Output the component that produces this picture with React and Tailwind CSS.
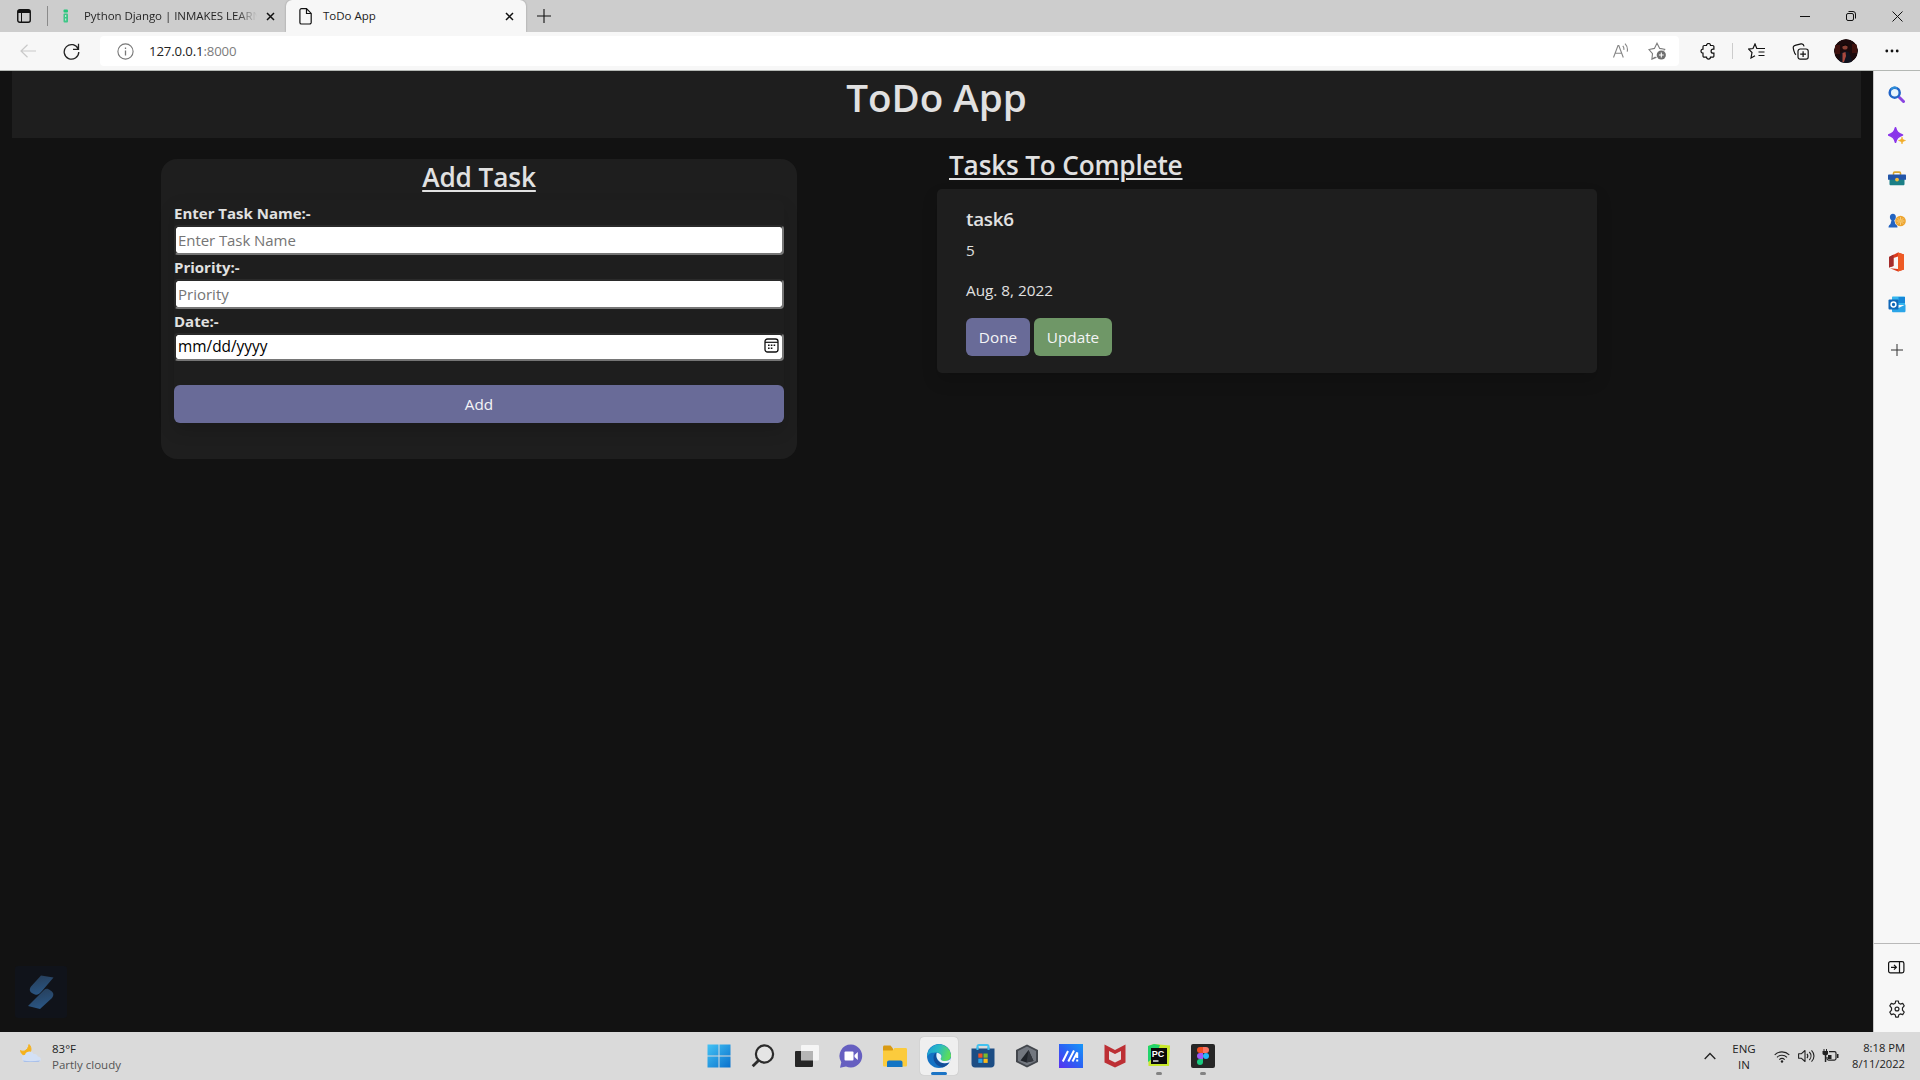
import React from "react";

const Svg = ({ w, h = w, vb, children, className = "" }) => (
  <svg width={w} height={h} viewBox={vb || `0 0 ${w} ${h}`} fill="none" className={`block shrink-0 ${className}`}>
    {children}
  </svg>
);

const CloseIcon = () => (
  <Svg w={9}>
    <path d="M1 1l7 7M8 1l-7 7" stroke="#111" strokeWidth="1.5" />
  </Svg>
);

function TabBar() {
  return (
    <div className="flex h-[32px] items-center bg-[#cdcdcd]">
      <div className="flex w-[47px] justify-center">
        <Svg w={14}>
          <rect x="0.75" y="0.75" width="12.5" height="12.5" rx="2" stroke="#111" strokeWidth="1.4" />
          <path d="M1 1h12v3H1z" fill="#111" />
          <path d="M4.5 3v10" stroke="#111" />
        </Svg>
      </div>
      <div className="h-[20px] w-px bg-[#8a8a8a]" />
      <div className="flex w-[238px] items-center">
        <Svg w={6} h={14} className="ml-[15px]">
          <rect x="0.5" y="0.5" width="4.5" height="3" rx="1" fill="#22c77a" />
          <rect x="0.5" y="4.5" width="4.5" height="9" rx="1" fill="#3fc687" />
          <path d="M2.7 6v2M2.7 9.5v2" stroke="#d9efe4" />
        </Svg>
        <div className="ml-[15px] w-[173px] overflow-hidden whitespace-nowrap bg-gradient-to-r from-[#222] from-88% to-transparent bg-clip-text text-[11.5px] leading-4 tracking-[-0.05px] text-transparent">
          Python Django | INMAKES LEARN
        </div>
        <div className="ml-[9px]">
          <CloseIcon />
        </div>
      </div>
      <div className="flex h-[32px] w-[240px] items-center rounded-t-[6px] bg-[#f7f7f7] shadow-[0_0_2px_rgba(0,0,0,0.3)]">
        <Svg w={13} h={17} className="ml-[13px]">
          <path d="M2.5 0.7h5l4.7 4.7v9a1.6 1.6 0 0 1-1.6 1.6H2.5a1.6 1.6 0 0 1-1.6-1.6V2.3A1.6 1.6 0 0 1 2.5 0.7zM7.5 1v4.5H12" stroke="#111" strokeWidth="1.2" />
        </Svg>
        <div className="ml-[11px] w-[182px] whitespace-nowrap text-[11.5px] leading-4 text-[#222]">ToDo App</div>
        <CloseIcon />
      </div>
      <Svg w={14} className="ml-[11px]">
        <path d="M7 0v14M0 7h14" stroke="#111" strokeWidth="1.1" />
      </Svg>
      <div className="ml-auto flex">
        <div className="flex w-[46px] justify-center">
          <Svg w={10}>
            <path d="M0 5.5h10" stroke="#111" />
          </Svg>
        </div>
        <div className="flex w-[46px] justify-center">
          <Svg w={10}>
            <rect x="0.5" y="2.5" width="7" height="7" rx="1.5" stroke="#111" />
            <path d="M2.5 0.5h4.5a2.5 2.5 0 0 1 2.5 2.5v4.5" stroke="#111" />
          </Svg>
        </div>
        <div className="flex w-[46px] justify-center">
          <Svg w={11}>
            <path d="M0.5 0.5l10 10M10.5 0.5l-10 10" stroke="#111" />
          </Svg>
        </div>
      </div>
    </div>
  );
}

function Toolbar() {
  return (
    <div className="flex h-[39px] items-center border-b border-[#b4b8b4] bg-[#f7f7f7]">
      <Svg w={16} h={14} className="ml-[20px]">
        <path d="M16 7H1M7.5 0.7L1 7l6.5 6.300" stroke="#c9c9c9" strokeWidth="1.2" />
      </Svg>
      <Svg w={17} h={17} className="ml-[27px]">
        <path d="M15.3 6.2A7.3 7.3 0 1 0 15.800 9M15.500 0.800v5.500H10" stroke="#222" strokeWidth="1.300" />
      </Svg>
      <div className="ml-[20px] flex h-[30px] w-[1579px] items-center rounded-[4px] bg-white">
        <Svg w={17} className="ml-[17px]">
          <circle cx="8.500" cy="8.500" r="7.600" stroke="#777" strokeWidth="1.100" />
          <path d="M8.500 7.500v5M8.500 4.500v1.400" stroke="#777" strokeWidth="1.300" />
        </Svg>
        <div className="ml-[15px] text-[13.200px] leading-5 tracking-[-0.130px] text-[#222]">
          127.0.0.1<span className="text-[#7c7c7c]">:8000</span>
        </div>
        <Svg w={16} h={16} className="ml-auto">
          <path d="M0.500 14.500L5 2.500h0.800l4.500 12M2.200 10.200h6.400M9.800 2.800c1 1.100 1.300 2.500 1 4M12 0.600c2.200 2.300 2.900 5 2.200 8" stroke="#858585" strokeWidth="1.100" />
        </Svg>
        <Svg w={18} className="mr-[13px] ml-[19px]">
          <path d="M8.500 15.200l-4.600 2 .6-5.600L1 7.500l5.400-1.100L9 1.200l2.700 5.200 5 .9-1 1.200M7.500 15l-3.400 2" stroke="#7d7d7d" strokeWidth="1.100" />
          <circle cx="13.300" cy="13" r="4.600" fill="#6e6e6e" />
          <path d="M13.300 10.600v4.800M10.900 13h4.800" stroke="#fff" strokeWidth="1.100" />
        </Svg>
      </div>
      <Svg w={17} className="ml-[21px]">
        <path d="M4.200 2.500h2.300a2 2 0 0 1 4 0h2.200a1.200 1.200 0 0 1 1.200 1.200v2.500h-.8a2 2 0 0 0 0 4h.8v2.700a1.200 1.200 0 0 1-1.200 1.200h-2.200a2 2 0 0 1-4 0H4.200A1.200 1.200 0 0 1 3 12.900v-2.700a2 2 0 0 1 0-4V3.700a1.200 1.200 0 0 1 1.200-1.200z" stroke="#111" strokeWidth="1.200" />
      </Svg>
      <div className="ml-[15px] h-[16px] w-px bg-[#ccc]" />
      <Svg w={18} h={16} className="ml-[15px]">
        <path d="M10.500 5.500h-1.700L7 1 5 5.500l-4.400.6L4 9.500l-1 5.500 4-2.200" stroke="#111" strokeWidth="1.200" />
        <path d="M10 5.500h7M10.500 9h6M10.500 12.500h6" stroke="#111" strokeWidth="1.200" />
      </Svg>
      <Svg w={17} className="ml-[26px]">
        <rect x="6" y="6" width="10.200" height="10.200" rx="2.200" stroke="#111" strokeWidth="1.200" />
        <path d="M11.100 8.200v5.800M8.200 11.100h5.800M4 11.700C2.500 11 2.300 9.500 1.700 7.200.8 3.800 1 3 4 2.200L9 .9c1.800-.4 2.600.4 3.100 2.400" stroke="#111" strokeWidth="1.200" />
      </Svg>
      <Svg w={24} className="ml-[25px] rounded-full">
        <circle cx="12" cy="12" r="12" fill="#1c0a0c" />
        <path d="M1 6h5v9H1zM18 5h5v9h-5z" fill="#3f110e" />
        <path d="M4 24l3-10 4-2 4 1 4 11z" fill="#11131f" />
        <circle cx="11" cy="8" r="2.600" fill="#8b4034" />
        <path d="M7.800 7.500a3.400 3.400 0 0 1 6.600 0l-3-1z" fill="#090506" />
        <path d="M8.500 14l3-1 .5 4-2 6H8.500z" fill="#a8483e" />
      </Svg>
      <Svg w={14} h={4} className="ml-[27px]">
        <circle cx="1.800" cy="2" r="1.400" fill="#111" />
        <circle cx="7" cy="2" r="1.400" fill="#111" />
        <circle cx="12.200" cy="2" r="1.400" fill="#111" />
      </Svg>
    </div>
  );
}

const Field = ({ label, children }) => (
  <div>
    <div className="h-[24px] text-[15px] font-bold leading-[25px] text-[#e1e1e1]">{label}</div>
    {children}
  </div>
);

const inputBox =
  "flex w-full items-center rounded-[4px] border-2 border-t-[#2a2a2a] border-l-[#2a2a2a] border-r-[#767676] border-b-[#767676] bg-white bg-clip-padding px-[2px]";

function AddTask() {
  return (
    <section className="mt-[21px] ml-[161px] h-[300px] w-[636px] rounded-[16px] bg-[#1e1e1e] px-[13px]">
      <h2 className="h-[41px] pt-[1px] text-center text-[26.2px] font-semibold leading-[34px] tracking-[-0.1px] text-[#e1e1e1] underline decoration-2 underline-offset-[3px]">
        Add Task
      </h2>
      <form className="flex h-[223px] flex-col rounded-[6px] pt-px shadow-[0_8px_16px_rgba(0,0,0,0.15)]">
        <Field label="Enter Task Name:-">
          <input placeholder="Enter Task Name" className={`${inputBox} h-[30px] text-[15px] tracking-[-0.07px] placeholder:text-[#757575]`} />
        </Field>
        <Field label="Priority:-">
          <input placeholder="Priority" className={`${inputBox} h-[30px] text-[15px] placeholder:text-[#757575]`} />
        </Field>
        <Field label="Date:-">
          <div className={`${inputBox} h-[28px] justify-between text-[15.4px] text-black`}>
            <span>mm/dd/yyyy</span>
            <Svg w={15} h={15} className="mr-px mb-[3px]">
              <rect x="1" y="1" width="13" height="13" rx="2.500" stroke="#111" strokeWidth="1.300" />
              <path d="M1 4.300h13" stroke="#111" strokeWidth="1.200" />
              <path d="M4 7.300h1.600M6.800 7.300h1.600M9.600 7.300h1.600M4 10.300h1.600M6.800 10.300h1.600" stroke="#111" strokeWidth="1.500" />
            </Svg>
          </div>
        </Field>
        <button type="button" className="mt-auto h-[38px] w-full rounded-[6px] bg-[#696b98] text-[15.300px] text-[#f4f4f6]">
          Add
        </button>
      </form>
    </section>
  );
}

function TaskList() {
  return (
    <section className="ml-[140px] w-[660px]">
      <h2 className="h-[51px] pt-[10px] pl-[12px] text-[26.2px] font-semibold leading-[34px] tracking-[-0.18px] text-[#e1e1e1] underline decoration-2 underline-offset-[3px]">
        Tasks To Complete
      </h2>
      <article className="h-[184px] rounded-[5px] bg-[#1e1e1e] pt-[18px] pl-[29px] text-[15.3px] text-[#e1e1e1] shadow-[0_8px_16px_rgba(0,0,0,0.15)]">
        <h3 className="h-[31px] text-[18.8px] font-semibold leading-[24px] tracking-[-0.25px]">task6</h3>
        <p className="h-[40px] leading-[24px]">5</p>
        <p className="h-[40px] leading-[24px]">Aug. 8, 2022</p>
        <div className="flex gap-[4px]">
          <button className="h-[38px] w-[64px] rounded-[6px] bg-[#696b98] text-[#f4f4f6]">Done</button>
          <button className="h-[38px] w-[78px] rounded-[6px] bg-[#6f9767] text-[#f4f4f6]">Update</button>
        </div>
      </article>
    </section>
  );
}

function Page() {
  return (
    <main className="relative min-w-0 flex-1 bg-[#121212] px-[12px]">
      <h1 className="h-[67px] bg-[#1e1e1e] text-center text-[38.6px] font-semibold leading-[52px] text-[#e1e1e1]">ToDo App</h1>
      <div className="-mx-[12px] flex items-start">
        <AddTask />
        <TaskList />
      </div>
      <div className="absolute bottom-[14px] left-[15px] flex size-[52px] items-center justify-center rounded-[3px] bg-[#10131a]">
        <Svg w={26} h={34}>
          <defs>
            <linearGradient id="sl" x1="0" y1="0" x2="0.300" y2="1">
              <stop stopColor="#263c56" />
              <stop offset="1" stopColor="#2a5582" />
            </linearGradient>
          </defs>
          <path d="M13 0.500L25.500 2.500 14 16c-2.500 3-4.500 4.500-7 3.500-5-1.500-6.500-4.500-4-8z" fill="url(#sl)" />
          <path d="M0 31L16 15c2-1.800 4-1.500 6.500.5 3.500 2 3.500 5 1.500 7.500L12 34z" fill="url(#sl)" />
        </Svg>
      </div>
    </main>
  );
}

const sideIcons = [
  <Svg w={17}>
    <path d="M11.500 11.500l4 4" stroke="#8a45e0" strokeWidth="3" strokeLinecap="round" />
    <circle cx="6.700" cy="6.700" r="5" stroke="#2164c8" strokeWidth="2.500" fill="#e8f4fc" />
    <path d="M3 3.500a5 5 0 0 1 6-1.300" stroke="#2e8fd8" strokeWidth="2" />
  </Svg>,
  <Svg w={18}>
    <path d="M7.500 0.800c1 4.200 2.500 5.700 7 7.200-4.500 1.500-6 3-7 7.200-1-4.200-2.500-5.700-7-7.200 4.500-1.500 6-3 7-7.200z" fill="#8a35ea" stroke="#8a35ea" strokeWidth="1.600" strokeLinejoin="round" />
    <path d="M14 10c.5 2.400 1 3 3.500 3.500-2.500.6-3 1.200-3.500 3.500-.5-2.300-1-2.900-3.500-3.500 2.500-.5 3-1.100 3.500-3.500z" fill="#f2ad27" stroke="#f2ad27" strokeWidth="0.600" />
  </Svg>,
  <Svg w={18} h={15}>
    <path d="M5.500 4V2.300c0-.8.500-1.200 1.200-1.200h4.600c.7 0 1.200.4 1.200 1.200V4" stroke="#d9a52f" strokeWidth="1.600" />
    <path d="M1.500 7h15v6c0 .8-.5 1.300-1.300 1.300H2.800c-.8 0-1.300-.5-1.300-1.300z" fill="#1b7f86" />
    <path d="M0 4.500C0 3.700.5 3.500 1 3.500h16c.6 0 1 .3 1 1v4.200H0z" fill="#2355a8" />
    <circle cx="9" cy="8.600" r="1.900" fill="#f2bd3e" />
  </Svg>,
  <Svg w={18} h={15}>
    <circle cx="12.500" cy="8" r="5.300" fill="#eda42f" />
    <path d="M12.500 4v8M8.500 8h8M9.700 5.200l5.600 5.600M15.300 5.200l-5.600 5.600" stroke="#fae0a0" strokeWidth="0.700" />
    <circle cx="12.500" cy="8" r="1.300" fill="#f4bc4d" />
    <path d="M0.500 14.500c0-2 1-2.600 2-3.500l1-3.700c-2.600-2-1.900-6.500 1.400-6.500s4 4.500 1.400 6.500l1 3.700c1.500 1 2.200 1.500 2.200 3.500z" fill="#2363c0" />
  </Svg>,
  <Svg w={17} h={20}>
    <path d="M10 0.500l6 2v15l-6 2-8-3.200 8 .7V4.500L5.500 6v8L1 15.500V5z" fill="#db3b1e" />
    <path d="M10 0.500l6 2v15l-6 2z" fill="#ee5a24" />
    <path d="M1 5l4.500-2.500V14L1 15.500z" fill="#a42c2b" />
  </Svg>,
  <Svg w={18} h={17}>
    <path d="M4 1.500c0-.7.400-1 1-1h11c.6 0 1 .3 1 1V9H4z" fill="#35b5ee" />
    <path d="M10.500 1H17v6h-6.500z" fill="#1587d8" />
    <path d="M4 9l6.500 3 7-3.500V15c0 .8-.5 1.300-1.300 1.300H5.200c-.7 0-1.200-.5-1.200-1.300z" fill="#2aa5e8" />
    <rect x="0.500" y="3.500" width="10" height="10" rx="1" fill="#1067b8" />
    <circle cx="5.500" cy="8.500" r="2.400" stroke="#fff" strokeWidth="1.500" />
  </Svg>,
];

function Sidebar() {
  return (
    <aside className="flex w-[47px] flex-col border-l border-[#c9c9c9] bg-[#f7f7f7] pt-[2px] pr-px">
      {sideIcons.map((icon, i) => (
        <div key={i} className="flex h-[42px] items-center justify-center">
          {icon}
        </div>
      ))}
      <div className="mt-[4px] flex h-[42px] items-center justify-center">
        <Svg w={12}>
          <path d="M6 0v12M0 6h12" stroke="#333" />
        </Svg>
      </div>
      <div className="-mr-px mt-auto flex h-[89px] flex-col items-center border-t border-[#b9b9b9] pt-[17px] pr-px">
        <Svg w={17} h={13}>
          <rect x="0.600" y="0.600" width="15.300" height="11.300" rx="1.800" stroke="#111" strokeWidth="1.200" />
          <path d="M11.500 1v11M3 6.300h5.300M6 3.900l2.400 2.400L6 8.700" stroke="#111" strokeWidth="1.200" />
        </Svg>
        <Svg w={18} vb="0 0 24 24" className="mt-[26px]">
          <path d="M9.600 4.300L10.300 1.300h3.400l.7 3 2 1.100 3.200-.9 2 3.200-2.300 2.800v3l2.300 2.800-2 3.200-3.200-.9-2 1.100-.7 3h-3.400l-.7-3-2-1.100-3.200.9-2-3.200 2.300-2.800v-3L2.400 7.700l2-3.200 3.200.9z" stroke="#222" strokeWidth="1.600" strokeLinejoin="round" />
          <circle cx="12" cy="12" r="2.600" stroke="#222" strokeWidth="1.600" />
        </Svg>
      </div>
    </aside>
  );
}

const taskIcons = [
  <Svg w={24}>
    <defs>
      <linearGradient id="win" x1="0" y1="0" x2="1" y2="1">
        <stop stopColor="#43c3f5" />
        <stop offset="1" stopColor="#0a70cc" />
      </linearGradient>
    </defs>
    <path d="M0.500 0.500h11v11h-11zM12.500 0.500h11v11h-11zM0.500 12.500h11v11h-11zM12.500 12.500h11v11h-11z" fill="url(#win)" />
  </Svg>,
  <Svg w={24}>
    <circle cx="13.500" cy="10" r="8.600" stroke="#2b2b2b" strokeWidth="2.200" fill="#e5e5e5" />
    <path d="M7.500 16.500L1.700 22.300" stroke="#2b2b2b" strokeWidth="2.800" />
  </Svg>,
  <Svg w={24}>
    <rect x="6" y="1" width="18" height="15.500" rx="1" fill="#f5f5f5" />
    <rect x="0" y="7" width="18" height="16" rx="1" fill="#262626" />
    <path d="M6 7h12v9.500H6z" fill="#b5b5b5" />
  </Svg>,
  <Svg w={24}>
    <path d="M12 0.500A11.500 11.500 0 1 1 7 22.500l-6 1.200 1.300-5.500A11.500 11.500 0 0 1 12 0.500z" fill="#665fc0" />
    <rect x="5.500" y="7.500" width="9" height="9" rx="1" fill="#fff" />
    <path d="M15.500 11l3.300-3v8l-3.300-3z" fill="#fff" />
  </Svg>,
  <Svg w={24}>
    <path d="M0 3.500C0 2 .6 1.500 1.500 1.500h6l2.500 3H10V9H0z" fill="#d99a13" />
    <path d="M0 6.500h9.500l2-2.500h11c1 0 1.500.5 1.500 1.500V21c0 1-.5 1.500-1.500 1.500h-21C.5 22.500 0 22 0 21z" fill="#fbcb3d" />
    <path d="M4 23v-4.500c0-1.200.8-2 2-2h11.500c1.200 0 2 .8 2 2V23z" fill="#1274c4" />
  </Svg>,
  <Svg w={24}>
    <defs>
      <linearGradient id="ed1" x1="0" y1="0" x2="1" y2="0.300">
        <stop stopColor="#1a9bd7" />
        <stop offset="0.500" stopColor="#28b9c4" />
        <stop offset="1" stopColor="#5bdc5c" />
      </linearGradient>
    </defs>
    <circle cx="12" cy="12" r="12" fill="#1472c4" />
    <path d="M0.300 10A12 12 0 0 1 24 11c.3 4-3 6-6 6-3.500 0-5-1.500-4-3 1.500-2 .3-5.500-4.500-5.500C5 8.500 1.500 9 .3 13z" fill="url(#ed1)" />
    <path d="M9.500 8.500C4 10.500 6 22 15.500 23.300c3-.8 5.500-2.500 7-5-9 3.500-15-2.300-13-9.800z" fill="#124d98" />
    <path d="M14 14c-1 1.500.5 3 4 3 2.800 0 5-1 6-3-.3 1.500-.8 3-1.500 4.300-5 2-10 .8-12.200-3.300-1.200-2.300-1-4.700-.5-6.300C13.500 9 15.500 12 14 14z" fill="#e9f2f8" />
  </Svg>,
  <Svg w={24}>
    <path d="M6.500 6V2.500c0-1 .5-1.500 1.500-1.500h8c1 0 1.500.5 1.500 1.500V6" stroke="#42c1ef" strokeWidth="2" />
    <path d="M0.500 4.500h23V20c0 2.200-1.300 3.500-3.500 3.500H4C1.800 23.500.5 22.200.5 20z" fill="#1c4d84" />
    <path d="M5.500 6V3h2v3zM16.500 6V3h2v3z" fill="#42c1ef" />
    <path d="M7.300 9.500h4.200v4.200H7.300z" fill="#ef5327" />
    <path d="M12.500 9.500h4.200v4.200h-4.200z" fill="#7fba29" />
    <path d="M7.300 14.700h4.200v4.200H7.300z" fill="#2ba4ea" />
    <path d="M12.500 14.700h4.200v4.200h-4.200z" fill="#fcb919" />
  </Svg>,
  <Svg w={24}>
    <path d="M12 0.500L23 6v12l-11 5.500L1 18V6z" fill="#43474d" />
    <path d="M12 2.500L21 7v10l-9 4.500L3 17V7z" fill="#72777f" />
    <path d="M13.500 6L5.500 16.500l6 2 7-1.500z" fill="#1f2329" />
    <path d="M13.500 6l-2 12.500 7-1.500z" fill="#34383f" />
  </Svg>,
  <Svg w={24}>
    <defs>
      <linearGradient id="asus" x1="0" y1="1" x2="1" y2="0">
        <stop stopColor="#5a2ff0" />
        <stop offset="0.500" stopColor="#2a62f4" />
        <stop offset="1" stopColor="#1697f8" />
      </linearGradient>
    </defs>
    <path d="M0 0h24v24H0z" fill="url(#asus)" />
    <path d="M3.800 17.500L9 7M9.300 17.500L15 6.500M13.500 17.500l4.700-9V14" stroke="#fff" strokeWidth="2" />
    <path d="M17.200 15.500h2V17.500h-2z" fill="#fff" />
  </Svg>,
  <Svg w={24}>
    <path d="M1.500 0.500L12 6l10.500-5.500v18L12 23.500l-10.500-5z" fill="#bd2f34" />
    <path d="M6 7l6 3 6-3v8.500l-6 3-6-3z" fill="#e3dcdc" />
  </Svg>,
  <Svg w={24}>
    <path d="M1 2l6-2 16 1.500-1 20.500H1.500z" fill="#c9e82c" />
    <path d="M1 2l6-2 6 1-4 11-8 6z" fill="#22d46b" />
    <path d="M4 4h16v16H4z" fill="#0a0a0a" />
    <text x="4.800" y="12.500" fontSize="9" fontWeight="700" fill="#fff" fontFamily="Liberation Sans, sans-serif">PC</text>
    <path d="M6 17h5.500" stroke="#fff" strokeWidth="1.300" />
  </Svg>,
  <Svg w={24}>
    <rect width="24" height="24" rx="2" fill="#262626" />
    <path d="M12 3H9a3 3 0 0 0 0 6h3z" fill="#f04e23" />
    <path d="M12 3h3a3 3 0 0 1 0 6h-3z" fill="#f97362" />
    <path d="M12 9H9a3 3 0 0 0 0 6h3z" fill="#9f58f5" />
    <circle cx="15" cy="12" r="3" fill="#23b7f8" />
    <path d="M12 15H9a3 3 0 1 0 3 3z" fill="#18cb80" />
  </Svg>,
];

function Taskbar() {
  return (
    <footer className="flex h-[48px] items-center bg-[#dadada] text-[11.5px] text-[#222]">
      <Svg w={22} h={19} className="mb-[6px] ml-[20px]">
        <path d="M9 0.500c-.5 3-2 5.500-4.500 6.500C2.500 7.500 1 7 0.500 6.500 1 10 4 12 7 11c4-1.500 5.500-7 2-10.500z" fill="#f5b21d" stroke="#f5b21d" strokeLinejoin="round" />
        <path d="M5.500 18a3.700 3.700 0 0 1-.5-7.300c1-3.700 7.500-4.300 8.500-.5 2-.8 4 .3 4.200 2.200 4.300.2 4.300 5.600 0 5.600z" fill="#d3e0f5" />
        <path d="M3 16.500c5 1 11 .8 17 0-.5 1-1.300 1.500-2.300 1.500H5.500c-1.200 0-2-.5-2.500-1.500z" fill="#a9c0ea" />
      </Svg>
      <div className="mt-[2px] ml-[10px] w-[645px] leading-[16px]">
        <div>83°F</div>
        <div className="text-[#555]">Partly cloudy</div>
      </div>
      <div className="flex">
        {taskIcons.map((icon, i) => (
          <div key={i} className="relative flex h-[48px] w-[44px] items-center justify-center">
            {i === 5 && <div className="absolute inset-x-[3px] inset-y-[5px] rounded-[4px] bg-[#efefef] shadow-[0_0_1px_rgba(0,0,0,0.25)]" />}
            <div className="relative">{icon}</div>
            {i === 5 && <div className="absolute bottom-[5px] h-[3px] w-[16px] rounded-full bg-[#1b74c5]" />}
            {i > 9 && <div className="absolute bottom-[5px] h-[3px] w-[6px] rounded-full bg-[#838383]" />}
          </div>
        ))}
      </div>
      <div className="mr-[15px] ml-auto flex items-center">
        <Svg w={12} h={8}>
          <path d="M0.700 7L6 1.500 11.300 7" stroke="#222" strokeWidth="1.300" />
        </Svg>
        <div className="mt-[2px] ml-[16px] w-[24px] text-center leading-[16px]">
          <div>ENG</div>
          <div>IN</div>
        </div>
        <Svg w={16} h={13} className="ml-[18px]">
          <path d="M0.700 4.800a10.500 10.500 0 0 1 14.600 0M3 7.300a7.200 7.200 0 0 1 10 0M5.300 9.700a3.900 3.900 0 0 1 5.400 0" stroke="#222" strokeWidth="1.100" />
          <circle cx="8" cy="11.500" r="1.200" fill="#222" />
        </Svg>
        <Svg w={17} h={14} className="ml-[8px]">
          <path d="M0.600 4.800h2.600L7 1.500v11L3.200 9.200H.6z" stroke="#222" strokeWidth="1.100" strokeLinejoin="round" />
          <path d="M9 4.800c1 1.300 1 3.100 0 4.400M11.300 3c2.200 2.300 2.200 5.700 0 8M13.500 1.300c3.300 3.300 3.300 8.100 0 11.400" stroke="#222" strokeWidth="1.100" />
        </Svg>
        <Svg w={17} h={14} className="ml-[7px]">
          <path d="M7 2.600h5.500c1 0 1.500.5 1.500 1.500v5.500c0 1-.5 1.500-1.500 1.500H6.500c-1 0-1.500-.5-1.500-1.500V8" stroke="#222" strokeWidth="1.200" />
          <path d="M1.500 0h1v2h1.500V0h1v2h1v2.500c0 1-.7 1.500-1.700 1.700V13H2.800V6.200C1.500 6 .5 5.500.5 4.500V2h1zM6 6h3.500v4H6zM15 5h1.500v4H15z" fill="#222" />
        </Svg>
        <div className="ml-[11px] w-[55px] whitespace-nowrap text-right text-[11.200px] leading-[16px]">
          <div>8:18 PM</div>
          <div>8/11/2022</div>
        </div>
      </div>
    </footer>
  );
}

export default function App() {
  return (
    <div className="flex h-[1080px] w-[1920px] flex-col overflow-hidden font-['Open_Sans','Noto_Sans',sans-serif]">
      <TabBar />
      <Toolbar />
      <div className="flex min-h-0 flex-1">
        <Page />
        <Sidebar />
      </div>
      <Taskbar />
    </div>
  );
}
